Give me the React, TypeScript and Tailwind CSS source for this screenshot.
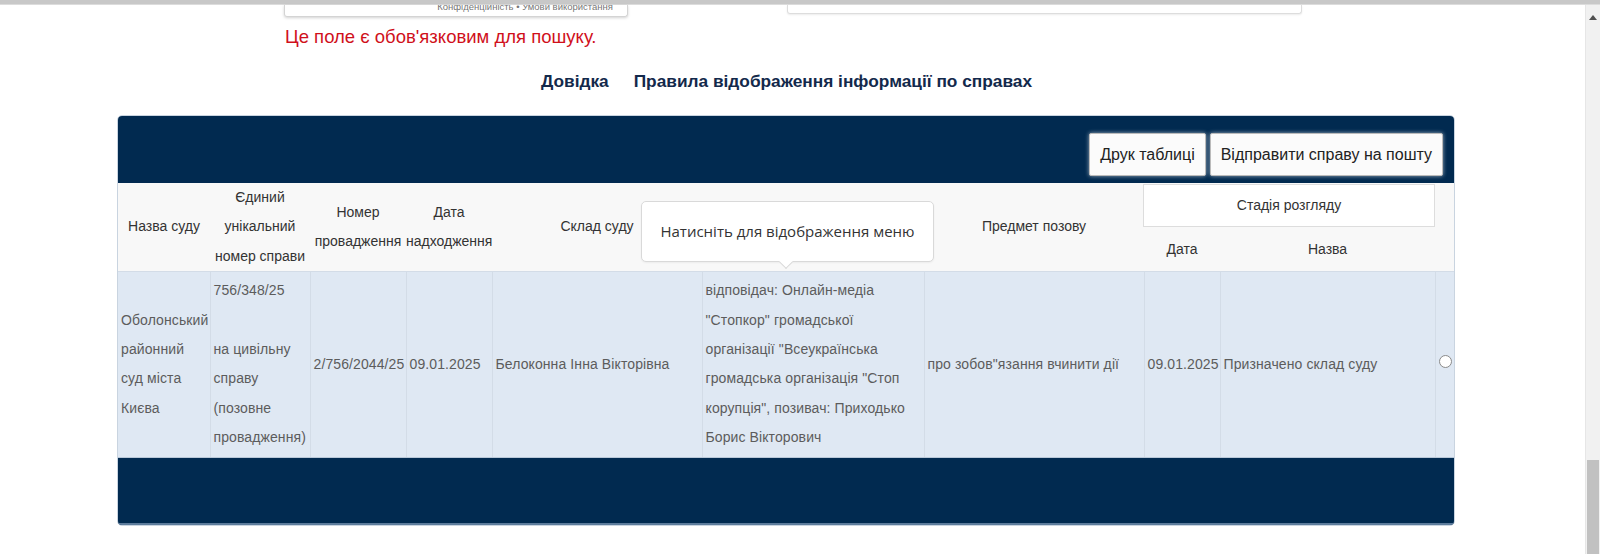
import React from "react";

const headCell =
  "align-middle text-center text-[14px] leading-[29.4px] text-[#333] font-normal p-0";
const dataCell =
  "align-middle text-left text-[14px] leading-[29.4px] text-[#5c5c5c] tracking-[0.1px] px-[3px] border-l border-[#d3dce7] first:border-l-0";

const Line = ({ children }: { children?: React.ReactNode }) => (
  <div className="whitespace-nowrap">{children ?? "\u00a0"}</div>
);

const Scrollbar = () => (
  <div className="w-[15px] h-full bg-[#f1f1f1] border-l border-[#e6e6e6] flex flex-col">
    <div className="h-[17px] flex items-end justify-center pb-[2px]">
      <div className="w-0 h-0 border-l-[4px] border-r-[4px] border-b-[5px] border-l-transparent border-r-transparent border-b-[#505050]" />
    </div>
    <div className="flex-1" />
    <div className="h-[94px] mx-[1px] bg-[#c1c1c1]" />
  </div>
);

const Tooltip = () => (
  <div className="absolute left-[523px] top-[18px] w-[293px] h-[61px] bg-white border border-[#d9d9d9] rounded-[5px] flex items-center justify-center font-['Open_Sans',sans-serif] text-[15px] text-[#333] shadow-[0_1px_2px_rgba(0,0,0,0.05)]">
    Натисніть для відображення меню
    <div className="absolute left-[139px] -bottom-[6px] w-[10px] h-[10px] bg-white border-r border-b border-[#d9d9d9] rotate-45" />
  </div>
);

export default function App() {
  return (
    <div className="relative h-[554px] w-[1600px] overflow-hidden bg-white font-['Liberation_Sans',Arial,sans-serif]">
      <div className="h-[5px] bg-[#c8c8c8] border-b border-[#dcdcdc]" />
      <div className="flex h-[549px]">
        <main className="flex-1 min-w-0">
          <div className="flex items-start">
            <div className="ml-[284px] w-[344px] h-[12px] border border-t-0 border-[#d4d4d4] rounded-b-[3px] shadow-[0_1px_3px_rgba(0,0,0,0.18)] overflow-hidden flex justify-end pr-[14px]">
              <span className="-mt-[4px] text-[9.5px] leading-[12px] text-[#777]">
                Конфіденційність • Умови використання
              </span>
            </div>
            <div className="ml-[159px] w-[515px] h-[9px] border border-t-0 border-[#dddddd] rounded-b-[3px] shadow-[0_1px_2px_rgba(0,0,0,0.08)]" />
          </div>

          <p className="mt-[10px] pl-[285px] text-[18.5px] leading-[20px] text-[#d0101b]">
            Це поле є обов'язковим для пошуку.
          </p>

          <nav className="mt-[24px] flex justify-center gap-[25px] pr-[12px] text-[17.3px] leading-[20px] font-bold text-[#13294b]">
            <a>Довідка</a>
            <a>Правила відображення інформації по справах</a>
          </nav>

          <section className="relative mt-[24px] ml-[117px] w-[1338px] rounded-[5px] overflow-hidden border border-[#c9d4e0]">
            <div className="h-[67px] bg-[#012a50] flex justify-end items-start pt-[17px] pr-[11px] gap-[4px]">
              <button className="h-[43px] px-[10px] bg-[#fbfbfb] border border-[#bbb] rounded-[2px] shadow-[0_0_4px_rgba(255,255,255,0.6)] text-[16px] text-[#222]">
                Друк таблиці
              </button>
              <button className="h-[43px] px-[10px] bg-[#fbfbfb] border border-[#bbb] rounded-[2px] shadow-[0_0_4px_rgba(255,255,255,0.6)] text-[16px] text-[#222]">
                Відправити справу на пошту
              </button>
            </div>

            <div className="relative">
              <table className="w-full table-fixed border-collapse">
                <colgroup>
                  <col className="w-[92px]" />
                  <col className="w-[100px]" />
                  <col className="w-[96px]" />
                  <col className="w-[86px]" />
                  <col className="w-[210px]" />
                  <col className="w-[222px]" />
                  <col className="w-[220px]" />
                  <col className="w-[76px]" />
                  <col className="w-[215px]" />
                  <col className="w-[21px]" />
                </colgroup>
                <thead className="bg-[#f8f8f8]">
                  <tr className="h-[44px]">
                    <th rowSpan={2} className={headCell}>Назва суду</th>
                    <th rowSpan={2} className={headCell}>
                      Єдиний
                      <br />
                      унікальний
                      <br />
                      номер справи
                    </th>
                    <th rowSpan={2} className={headCell}>
                      Номер
                      <br />
                      провадження
                    </th>
                    <th rowSpan={2} className={headCell}>
                      Дата
                      <br />
                      надходження
                    </th>
                    <th rowSpan={2} className={headCell}>Склад суду</th>
                    {/* header of this column is covered by the tooltip */}
                    <th rowSpan={2} className={headCell} />
                    <th rowSpan={2} className={headCell}>Предмет позову</th>
                    <th colSpan={2} className="p-0 align-top">
                      <div className="mt-px -ml-px h-[43px] bg-white border border-[#dddddd] flex items-center justify-center text-[14px] font-normal text-[#333]">
                        Стадія розгляду
                      </div>
                    </th>
                    <th rowSpan={2} className="p-0" />
                  </tr>
                  <tr className="h-[43px]">
                    <th className={headCell}>Дата</th>
                    <th className={headCell}>Назва</th>
                  </tr>
                </thead>
                <tbody>
                  <tr className="bg-[#dfe8f3] border-t border-[#d3dce7] h-[185px]">
                    <td className={dataCell}>
                      <Line>Оболонський</Line>
                      <Line>районний</Line>
                      <Line>суд міста</Line>
                      <Line>Києва</Line>
                    </td>
                    <td className={dataCell}>
                      <Line>756/348/25</Line>
                      <Line />
                      <Line>на цивільну</Line>
                      <Line>справу</Line>
                      <Line>(позовне</Line>
                      <Line>провадження)</Line>
                    </td>
                    <td className={dataCell}>2/756/2044/25</td>
                    <td className={dataCell}>09.01.2025</td>
                    <td className={dataCell}>Белоконна Інна Вікторівна</td>
                    <td className={dataCell}>
                      <Line>відповідач: Онлайн-медіа</Line>
                      <Line>"Стопкор" громадської</Line>
                      <Line>організації "Всеукраїнська</Line>
                      <Line>громадська організація "Стоп</Line>
                      <Line>корупція", позивач: Приходько</Line>
                      <Line>Борис Вікторович</Line>
                    </td>
                    <td className={dataCell}>про зобов"язання вчинити дії</td>
                    <td className={dataCell}>09.01.2025</td>
                    <td className={dataCell}>Призначено склад суду</td>
                    <td className={dataCell + " text-center"}>
                      <span className="relative -top-[4px] inline-block align-middle w-[13px] h-[13px] rounded-full border border-[#8a8a8a] bg-white" />
                    </td>
                  </tr>
                </tbody>
              </table>
              <Tooltip />
            </div>

            <div className="h-[68px] bg-[#012a50] border-t border-[#b9c8d8] border-b-2 border-b-[#5d7c9c]" />
          </section>
        </main>
        <Scrollbar />
      </div>
    </div>
  );
}
